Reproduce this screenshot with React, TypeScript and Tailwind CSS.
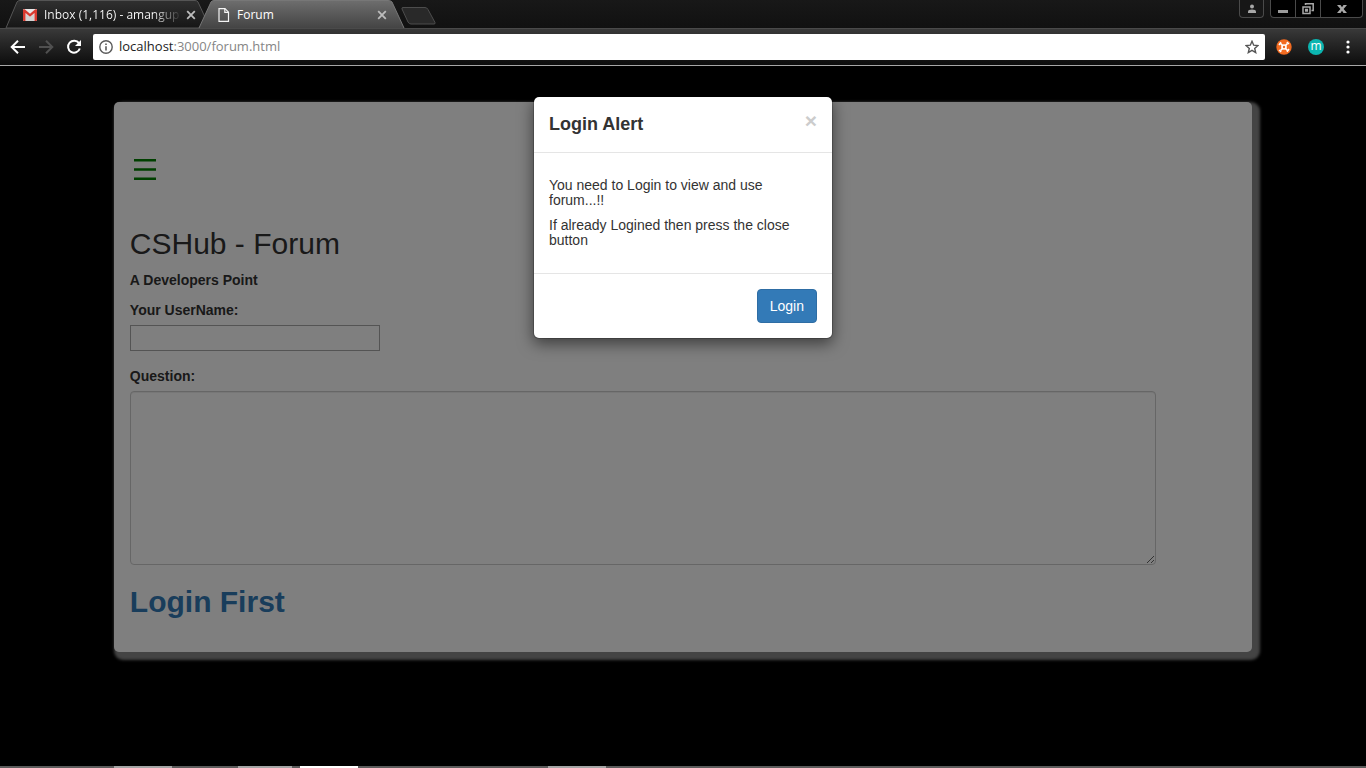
import React from "react";

function GmailIcon() {
  return (
    <svg width="14" height="12" viewBox="0 0 14 12" aria-hidden="true" className="shrink-0">
      <rect width="14" height="12" rx="1" fill="#e8e8e8" />
      <path d="M3 12V5l4 3 4-3v7z" fill="#d2d2d2" />
      <path d="M0 1.200C0 .2 1.200-.2 2 .5l5 4.300L12 .5c.8-.7 2-.3 2 .7V11a1 1 0 0 1-1 1h-1.500V4L7 7.800 2.500 4v8H1a1 1 0 0 1-1-1z" fill="#d93a30" />
    </svg>
  );
}

function PageIcon() {
  return (
    <svg width="12" height="14" viewBox="0 0 12 14" fill="none" stroke="#f4f4f4" aria-hidden="true" className="shrink-0">
      <path d="M1 .7h6l3.500 3.500v9.100H1z" strokeWidth="1.200" />
      <path d="M6.800.7v3.600h3.700" strokeWidth="1.200" />
    </svg>
  );
}

function CloseTab({ label }: { label: string }) {
  return (
    <button type="button" aria-label={label} className="shrink-0">
      <svg width="10" height="10" viewBox="0 0 10 10" stroke="#bdbdbd" strokeWidth="1.800" aria-hidden="true">
        <path d="M1.200 1.200l7.600 7.600M8.800 1.200L1.200 8.800" />
      </svg>
    </button>
  );
}

function TabStrip() {
  return (
    <div className="relative flex h-7 items-start bg-linear-to-b from-[#181818] to-[#111111] pr-[3px]">
      <svg width="440" height="28" viewBox="0 0 440 28" className="absolute left-0 top-0" aria-hidden="true">
        <defs>
          <linearGradient id="activeTab" x1="0" y1="0" x2="0" y2="1">
            <stop offset="0" stopColor="#6e6e6e" />
            <stop offset="1" stopColor="#444444" />
          </linearGradient>
          <linearGradient id="idleTab" x1="0" y1="0" x2="0" y2="1">
            <stop offset="0" stopColor="#303030" />
            <stop offset="1" stopColor="#161616" />
          </linearGradient>
        </defs>
        <path d="M6 28L17 2q1-1.500 3-1.500h175q2 0 3 1.500l12 26z" fill="url(#idleTab)" stroke="#555555" />
        <path d="M199 28L211 2q1-1.500 3-1.500h174q3 0 4 1.500l12 26z" fill="url(#activeTab)" />
        <path d="M199 28L211 2q1-1.500 3-1.500h174q3 0 4 1.500l12 26" fill="none" stroke="#777777" />
        <path d="M403 7.500h22q2 0 3 2l7 13q.5 1.500-1 1.500h-23q-2 0-3-2l-6-13q-.5-1.500 1-1.500z" fill="#292929" stroke="#4d4d4d" />
      </svg>
      <div className="relative flex h-7 w-[194px] items-center gap-[7px] pl-[23px] pt-0.5">
        <GmailIcon />
        <span className="grow whitespace-nowrap bg-linear-to-r from-white from-80% to-white/10 bg-clip-text font-['Open_Sans',sans-serif] text-[12px] text-transparent">
          Inbox (1,116) - amangup
        </span>
        <CloseTab label="Close Inbox tab" />
      </div>
      <div className="relative ml-6 flex h-7 w-[169px] items-center gap-[7px] pt-0.5">
        <PageIcon />
        <span className="grow font-['Open_Sans',sans-serif] text-[12px] text-white">Forum</span>
        <CloseTab label="Close Forum tab" />
      </div>
      <div className="relative ml-auto flex h-[18px] gap-1.5">
        <button type="button" aria-label="Profile" className="flex w-[25px] items-center justify-center rounded-b border border-t-0 border-[#4a4a4a] bg-[#171717]">
          <svg width="10" height="10" viewBox="0 0 10 10" fill="#a8a8a8" aria-hidden="true">
            <circle cx="5" cy="2.500" r="2" />
            <path d="M1 9V7.500Q1 5.500 5 5.500t4 2V9z" />
          </svg>
        </button>
        <div className="flex rounded-b border border-t-0 border-[#4a4a4a] bg-black">
          <button type="button" aria-label="Minimize" className="flex w-6 items-center justify-center">
            <svg width="10" height="12" viewBox="0 0 10 12" aria-hidden="true"><path d="M0 7h10v3H0z" fill="#9b9b9b" /></svg>
          </button>
          <button type="button" aria-label="Restore" className="flex w-[26px] items-center justify-center border-x border-[#4a4a4a]">
            <svg width="12" height="12" viewBox="0 0 12 12" fill="none" stroke="#a8a8a8" strokeWidth="1.500" aria-hidden="true">
              <path d="M3.500 2V.8h7.700v6.700H9.500M1 4h7v6.500H1zM3.700 6.500h1.600v1.600H3.700z" />
            </svg>
          </button>
          <button type="button" aria-label="Close window" className="flex w-[41px] items-center justify-center">
            <svg width="10" height="10" viewBox="0 0 10 10" fill="#a8a8a8" aria-hidden="true">
              <path d="M0 1h3.500L5 3.200 6.500 1H10L6.600 5 10 9H6.500L5 6.800 3.500 9H0l3.400-4z" />
            </svg>
          </button>
        </div>
      </div>
    </div>
  );
}

function Toolbar() {
  return (
    <div className="flex h-[37px] items-center border-t border-[#4a4a4a] bg-linear-to-b from-[#393939] to-[#0d0d0d] pl-2.5 pr-2.5">
      <div className="flex w-[83px] shrink-0 items-center gap-3">
        <button type="button" aria-label="Back">
          <svg width="16" height="16" viewBox="0 0 16 16" fill="none" stroke="#ffffff" strokeWidth="2" aria-hidden="true">
            <path d="M15 8H2.500M8 1.700L1.700 8 8 14.300" />
          </svg>
        </button>
        <button type="button" aria-label="Forward">
          <svg width="16" height="16" viewBox="0 0 16 16" fill="none" stroke="#505050" strokeWidth="2" aria-hidden="true">
            <path d="M1 8h12.500M8 1.700L14.300 8 8 14.300" />
          </svg>
        </button>
        <button type="button" aria-label="Reload">
          <svg width="16" height="16" viewBox="0 0 16 16" aria-hidden="true">
            <path d="M13 4.200A6 6 0 1 0 13.800 9.500" fill="none" stroke="#ffffff" strokeWidth="2" />
            <path d="M15 1v6H9z" fill="#ffffff" />
          </svg>
        </button>
      </div>
      <div className="flex h-[26px] grow items-center rounded-xs bg-white px-1.5">
        <svg width="14" height="14" viewBox="0 0 14 14" fill="none" stroke="#5a5a5a" strokeWidth="1.400" aria-hidden="true" className="shrink-0">
          <circle cx="7" cy="7" r="6.200" />
          <path d="M7 6.200V10.500M7 3.500V5" strokeWidth="1.600" />
        </svg>
        <div className="ml-1.5 grow font-['Open_Sans',sans-serif] text-[13px] text-[#858585]">
          <span className="text-[#222222]">localhost</span>:3000/forum.html
        </div>
        <button type="button" aria-label="Bookmark this page">
          <svg width="14" height="14" viewBox="0 0 14 14" fill="none" stroke="#555555" strokeWidth="1.400" aria-hidden="true">
            <path d="M7 1.300l1.700 3.900 4.200.4-3.200 2.800 1 4.200L7 10.400l-3.700 2.200 1-4.200L1.100 5.600l4.200-.4z" />
          </svg>
        </button>
      </div>
      <div className="flex shrink-0 items-center gap-4 pl-[11px]">
        <button type="button" aria-label="Extension">
          <svg width="16" height="16" viewBox="0 0 16 16" aria-hidden="true">
            <circle cx="8" cy="8" r="7.700" fill="#f26b21" />
            <path d="M4.500 4.500l7 7M11.500 4.500l-7 7" stroke="#ffffff" strokeWidth="1.700" />
            <circle cx="8" cy="8" r="2.800" fill="#ffffff" />
            <circle cx="8" cy="8" r="1.200" fill="#f26b21" />
            <path d="M3 6L5 3.200M10.800 3.200L13 5M3 11L5.200 12.800M13 10L11 12.800" stroke="#ffffff" strokeWidth="1.500" />
          </svg>
        </button>
        <button type="button" aria-label="Extension m" className="flex size-4 items-center justify-center rounded-full bg-[#0bb5b0] pb-0.5 font-['Open_Sans',sans-serif] text-[12px] leading-none text-white">
          m
        </button>
        <button type="button" aria-label="Menu" className="flex w-4 justify-center">
          <svg width="4" height="14" viewBox="0 0 4 14" fill="#ffffff" aria-hidden="true">
            <circle cx="2" cy="2" r="1.600" />
            <circle cx="2" cy="7" r="1.600" />
            <circle cx="2" cy="12" r="1.600" />
          </svg>
        </button>
      </div>
    </div>
  );
}

function ForumCard() {
  return (
    <section className="mx-auto h-[550px] w-5/6 rounded-[5px] bg-white px-4 pt-[50px] text-[#333333] shadow-[4px_4px_3px_4px_#888888]">
      <button type="button" aria-label="Open menu" className="block pl-1 pt-[7px]">
        <svg width="22" height="21" viewBox="0 0 22 21" fill="#008000" aria-hidden="true">
          <path d="M0 0h22v2.500H0zM0 9.200h22v2.500H0zM0 18.500h22V21H0z" />
        </svg>
      </button>
      <h1 className="mt-12 text-[30px] leading-8">CSHub - Forum</h1>
      <p className="mt-2.5 text-[14px] leading-5 font-bold">A Developers Point</p>
      <label htmlFor="username" className="mt-2.5 block text-[14px] leading-5 font-bold">Your UserName:</label>
      <input id="username" type="text" className="mt-[5px] block h-[26px] w-[250px] border border-[#a9a9a9] bg-white px-1" />
      <label htmlFor="question" className="mt-[15px] block text-[14px] leading-5 font-bold">Question:</label>
      <div className="mt-[5px] pr-20">
        <textarea id="question" className="block h-[174px] w-full resize rounded border border-[#cccccc] bg-white px-3 py-1.5 shadow-[inset_0_1px_1px_rgba(0,0,0,0.075)]" />
      </div>
      <a href="#login" className="mt-5 block text-[30px] leading-[33px] font-bold text-[#337ab7]">Login First</a>
    </section>
  );
}

function LoginDialog() {
  return (
    <div role="dialog" aria-labelledby="login-title" className="absolute inset-x-0 top-[30px] mx-auto w-[300px] rounded-md border border-black/20 bg-white bg-clip-padding text-[14px] leading-[15px] text-[#333333] shadow-[0_5px_15px_rgba(0,0,0,0.5)]">
      <div className="flex h-14 items-start justify-between border-b border-[#e5e5e5] px-[15px] pt-[15px]">
        <h2 id="login-title" className="text-[18px] leading-6 font-bold">Login Alert</h2>
        <button type="button" aria-label="Close" className="text-[21px] leading-[18px] font-bold text-[#cccccc]">×</button>
      </div>
      <div className="flex h-[121px] flex-col gap-2.5 border-b border-[#e5e5e5] px-[15px] pt-[25px]">
        <p>You need to Login to view and use forum...!!</p>
        <p>If already Logined then press the close button</p>
      </div>
      <div className="flex justify-end p-[15px]">
        <button type="button" className="h-[34px] rounded border border-[#2e6da4] bg-[#337ab7] px-3 text-white">Login</button>
      </div>
    </div>
  );
}

function Taskbar() {
  return (
    <div className="flex h-0.5 bg-[#5c5c5c] pl-[114px]" aria-hidden="true">
      <div className="mr-[66px] h-full w-[58px] bg-[#a5a5a5]" />
      <div className="mr-2 h-full w-[54px] bg-[#a5a5a5]" />
      <div className="mr-[190px] h-full w-[58px] bg-white" />
      <div className="h-full w-[58px] bg-[#a5a5a5]" />
    </div>
  );
}

export default function App() {
  return (
    <div className="flex min-h-screen flex-col bg-black font-['Liberation_Sans',Arial,sans-serif]">
      <header>
        <TabStrip />
        <Toolbar />
        <div className="h-px bg-[#a8a8a8]" />
      </header>
      <main className="relative flex grow flex-col pt-9">
        <ForumCard />
        <div className="absolute inset-0 bg-black/50" />
        <LoginDialog />
      </main>
      <Taskbar />
    </div>
  );
}
